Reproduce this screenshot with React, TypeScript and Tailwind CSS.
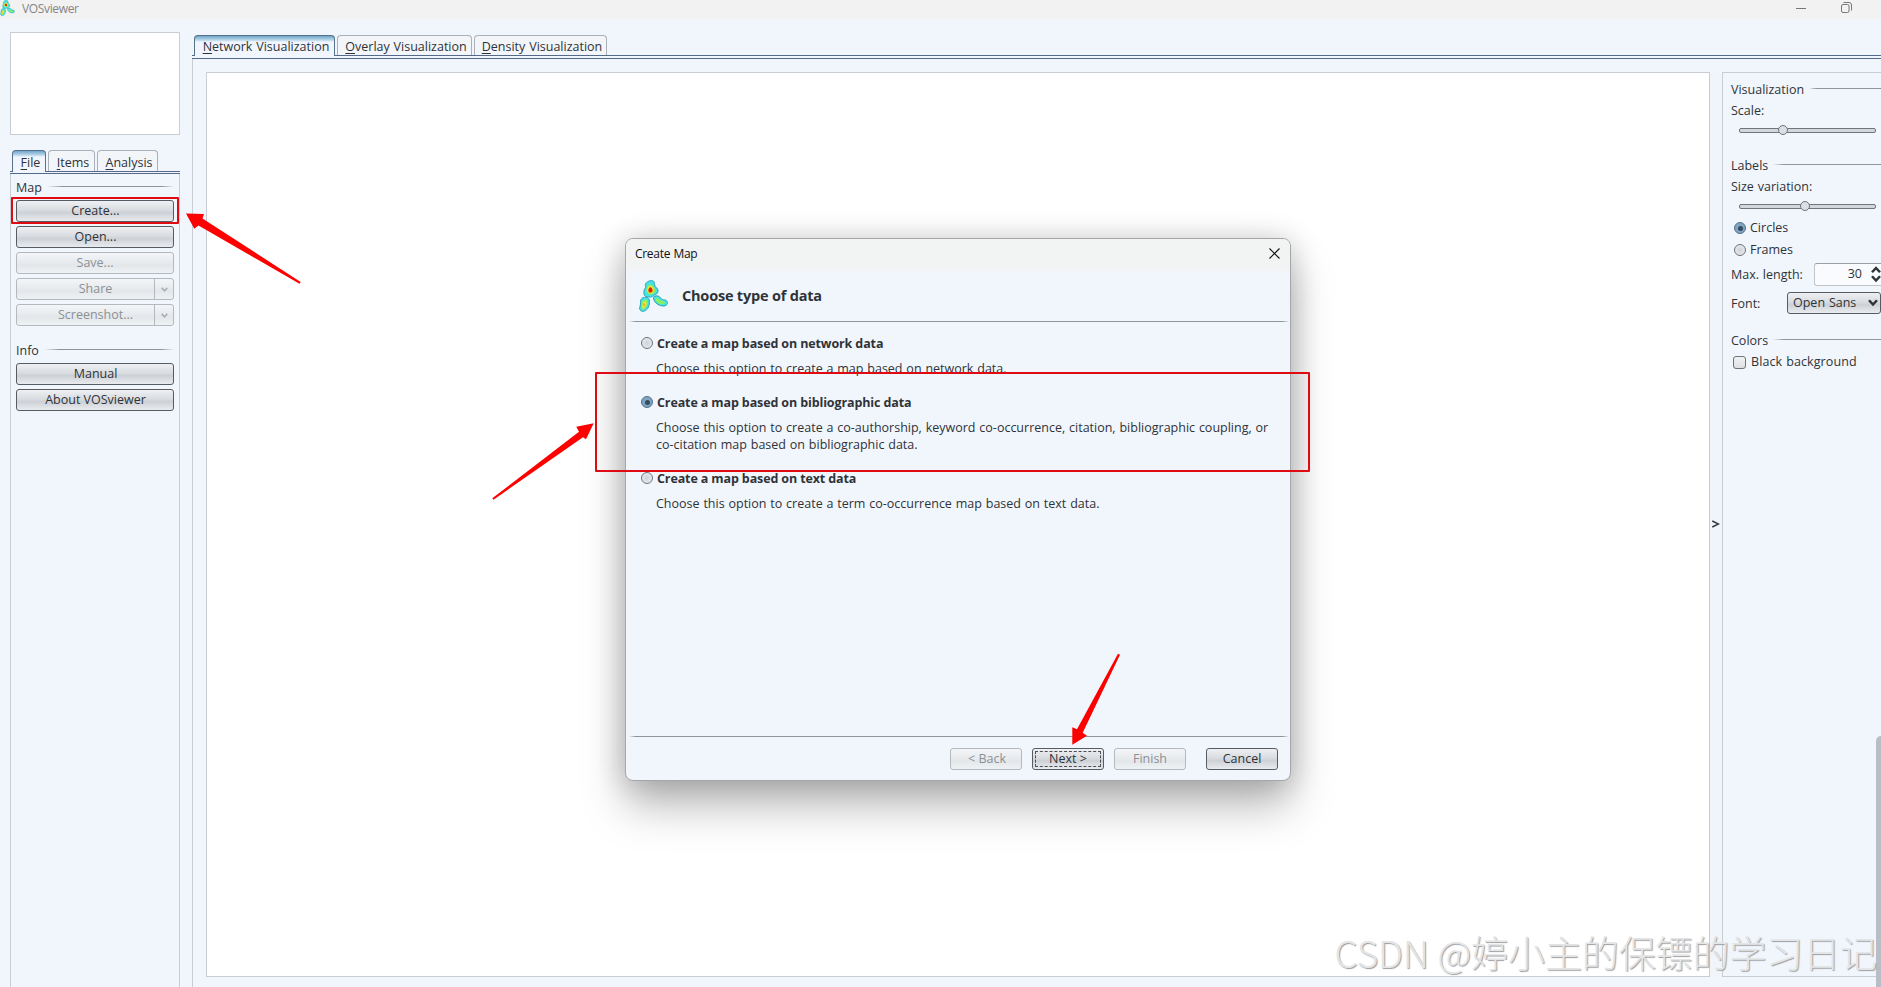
import type { ReactNode } from "react";
import clsx from "clsx";

function Logo({ className }: { className?: string }) {
  return (
    <svg viewBox="0 0 29 32" className={className}>
      <g stroke="#2ea3b8" strokeWidth="1" strokeLinejoin="round" fill="#45e2e6">
        <path d="M11.300.7c1.700-.3 3.200 0 3.700 1.200.5 1.600.4 3.200 1.200 4.700 1 1.200 2.700 1.900 2.800 3.400 0 1.500-.2 2.700-1 3.600-1.500 1-2.500.9-3.700 2-1 1-2 1.600-3.600 1.400-1.800-.2-4.200.2-5.200-1.500-.9-1.400-.5-3-.5-4.500 0-1.700 1.400-2.500 1.600-3.900.1-1.300-.6-2.200-.1-3.300.8-1.400 3-2.700 4.800-3.100Z" />
        <path d="M14.700 16.700c1.600-.9 3.800-1.300 5.300-.2 1.400.9 2 2.400 3.500 3 1.400.5 3.100.2 4 1.200 1 1.100 1.300 2.700.4 3.800-1 1.100-2.500 1.700-3.900 1.500-1.800-.1-3.500-.6-5-1.500-1.500-.9-2.700-2-3.500-3.500-.7-1.300-1.500-2.900-.8-4.300Z" />
        <path d="M3 18.300c1.500-1 3.400-1.400 5-.8 1.300.4 2.100 1.300 2.300 2.500.4 1.900.2 3.700-.3 5.500-.6 2-1.700 3.900-3.500 5-1.200.9-2.900 1.100-4.200.5C1.200 30.500.5 29.300.7 28c.1-1.400.8-2.600.8-4 0-2-.3-4.400 1.500-5.700Z" />
      </g>
      <g fill="#8ff05a">
        <path d="M11.300 4.500c2 .3 3.300 1.600 3.900 3.400.9 1 1.700 2.300 1 3.800-.8 1.600-2.300 2.700-4.200 2.800-2.300.2-4.300-1.400-4.500-3.600-.1-2.600.9-6.500 3.800-6.400Z" />
        <path d="M17 18.400c1.700-.5 3.200.6 4.300 1.900 1.400 1.100 3.400.8 4.500 2 .3 1.300-.9 2.200-2.400 2-2.200-.1-4.600-.9-5.900-2.800-.7-1-1.200-2.300-.5-3.100Z" />
        <path d="M4.500 20c1.200-.8 3.200-.8 3.900.4.600 2 .2 4-.7 5.900-.7 1.500-1.800 3-3.500 3.300-1.200.2-2-.7-1.900-1.900.1-2.600.2-6 2.200-7.700Z" />
      </g>
      <g fill="#fbe52c">
        <path d="M11.300 6c1.600.1 2.900 1.600 3.200 3.200.4 1.900-.9 3.900-2.900 4.100-1.900.2-3.300-1.400-3.300-3.200.1-1.900 1.200-4.200 3-4.100Z" />
        <path d="M5.900 21.500c1.200-.2 1.700.9 1.400 2.200-.3 1.700-1.200 4-2.700 4.300-1.100 0-1.200-1.200-1-2.400.3-1.500.8-3.800 2.300-4.100Z" />
      </g>
      <ellipse cx="5.300" cy="24.700" rx="1" ry="1.800" fill="#f9ae25" />
      <path d="M11 7.200c1.500-.2 2.300 1.500 2.600 2.900.3 1.300-.9 2.600-2.200 2.500-1.300 0-2.200-1.100-2-2.400.2-1.200.5-2.800 1.600-3Z" fill="#dc200b" />
    </svg>
  );
}

function SectionTitle({ children, fade }: { children: ReactNode; fade?: boolean }) {
  return (
    <div className="flex h-[18px] items-center">
      <span className="whitespace-nowrap">{children}</span>
      <span
        className={clsx(
          "-mt-1 ml-[5px] h-px flex-1",
          fade
            ? "bg-[linear-gradient(90deg,transparent,#8d949c_12%,#8d949c_90%,transparent)]"
            : "bg-[linear-gradient(90deg,transparent,#8d949c_10%)]"
        )}
      />
    </div>
  );
}

function Button({
  children,
  disabled,
  menu,
  focused,
  className,
}: {
  children: ReactNode;
  disabled?: boolean;
  menu?: boolean;
  focused?: boolean;
  className?: string;
}) {
  return (
    <button
      disabled={disabled}
      className={clsx(
        "relative flex h-[22px] items-center justify-center rounded-[3px] border pb-px",
        disabled
          ? "border-[#b4b9bf] bg-[linear-gradient(#f3f5f7,#e7eaed_50%,#e4e7ea_60%,#eff2f5)] text-[#8b9095]"
          : "border-[#565c64] bg-[linear-gradient(#eef0f3,#d9dce0_45%,#cdd1d6_58%,#e9ebee)]",
        className
      )}
    >
      {children}
      {menu && (
        <span className="absolute inset-y-0 right-0 flex w-[19px] items-center justify-center border-l border-[#b4b9bf] text-[#a9aeb3]">
          <Chevron className="mt-0.5 w-[7px]" />
        </span>
      )}
      {focused && <span className="absolute inset-[2px] rounded-[1px] border border-dashed border-[#4a4f55]" />}
    </button>
  );
}

function Chevron({ className, width = 1.8 }: { className?: string; width?: number }) {
  return (
    <svg viewBox="0 0 8 6" className={className} fill="none" stroke="currentColor" strokeWidth={width}>
      <path d="M.8 1 4 4.400 7.200 1" />
    </svg>
  );
}

function Tab({ label, active, className }: { label: string; active?: boolean; className?: string }) {
  return (
    <div
      className={clsx(
        "flex justify-center rounded-t-[4px] border border-b-0 pl-[3px] whitespace-nowrap",
        active
          ? "z-10 border-[#56718c] bg-[linear-gradient(#6fa6c9,#b9d6ea_4px,#f1f6fe_6px)]"
          : "mb-px border-[#a9b0b7] bg-[linear-gradient(#f3f5f8,#f2f6fb)]",
        className
      )}
    >
      <span>
        <span className="underline underline-offset-2">{label[0]}</span>
        {label.slice(1)}
      </span>
    </div>
  );
}

function Radio({ checked }: { checked?: boolean }) {
  return (
    <span
      className={clsx(
        "flex size-3 shrink-0 items-center justify-center rounded-full border",
        checked
          ? "border-[#55718b] bg-[#7ea5c3]"
          : "border-[#6d737a] bg-[radial-gradient(#cfd2d6,#f0f1f3)]"
      )}
    >
      {checked && <span className="size-[5px] rounded-full bg-[#364b5e]" />}
    </span>
  );
}

function Slider({ thumb }: { thumb: string }) {
  return (
    <div className="relative ml-2 h-[5px] w-[137px] rounded-[2px] border border-[#6f757c] bg-[#d3d7db]">
      <span className={clsx("absolute -top-[4px] size-[10px] rounded-full border border-[#6f757c] bg-[#dcdfe2]", thumb)} />
    </div>
  );
}

function Option({
  title,
  checked,
  children,
  className,
}: {
  title: string;
  checked?: boolean;
  children: ReactNode;
  className?: string;
}) {
  return (
    <div className={className}>
      <div className="flex h-[18px] items-center gap-[4px] font-bold tracking-[-0.12px] [word-spacing:0px]">
        <Radio checked={checked} />
        <span className="pt-0.5 whitespace-nowrap">{title}</span>
      </div>
      <p className="mt-2 ml-[15px] leading-[17px] whitespace-nowrap">{children}</p>
    </div>
  );
}

function Sidebar() {
  return (
    <aside className="ml-[10px] flex w-[170px] shrink-0 flex-col pt-[13px]">
      <div className="h-[103px] border border-[#c9ced4] bg-white" />
      <div className="mt-[15px] flex h-[22px] gap-[2px] pl-[2px] leading-[23px]">
        <Tab label="File" active className="w-[34px]" />
        <Tab label="Items" className="w-[47px]" />
        <Tab label="Analysis" className="w-[61px]" />
      </div>
      <div className="-mt-px h-[3px] border-y border-[#56698a]" />
      <div className="flex-1 border-x border-[#c9ced4] px-[5px] pt-[5px]">
        <SectionTitle fade>Map</SectionTitle>
        <div className="mt-[3px] flex flex-col gap-1">
          <Button className="pl-px">Create...</Button>
          <Button className="pl-px">Open...</Button>
          <Button disabled>Save...</Button>
          <Button disabled menu className="pl-px">Share</Button>
          <Button disabled menu className="pl-px">Screenshot...</Button>
        </div>
        <div className="mt-4">
          <SectionTitle fade>Info</SectionTitle>
        </div>
        <div className="mt-[3px] flex flex-col gap-1">
          <Button className="pl-px">Manual</Button>
          <Button className="pl-px">About VOSviewer</Button>
        </div>
      </div>
    </aside>
  );
}

function OptionsPanel() {
  return (
    <aside className="flex w-[159px] shrink-0 flex-col border border-r-0 border-[#c9ced4] pl-2">
      <div className="mt-2">
        <SectionTitle>Visualization</SectionTitle>
      </div>
      <div className="mt-[3px] mb-[8px] h-[18px]">Scale:</div>
      <Slider thumb="left-[38px]" />
      <div className="mt-6">
        <SectionTitle>Labels</SectionTitle>
      </div>
      <div className="mt-[3px] mb-[8px] h-[18px]">Size variation:</div>
      <Slider thumb="left-[60px]" />
      <div className="mt-[10px] ml-[3px] flex h-[18px] items-center gap-1">
        <Radio checked />
        Circles
      </div>
      <div className="mt-1 ml-[3px] flex h-[18px] items-center gap-1">
        <Radio />
        Frames
      </div>
      <div className="mt-1 flex h-[23px] items-center">
        <span className="w-[83px] whitespace-nowrap">Max. length:</span>
        <div className="flex h-full flex-1 items-center justify-end gap-[9px] rounded-l-[3px] border border-r-0 border-[#c0c6cc] border-t-[#9aa0a7] bg-[#f9fbfe] pb-px">
          <span>30</span>
          <span className="flex flex-col gap-[2px]">
            <Chevron width={2} className="w-[10px] rotate-180" />
            <Chevron width={2} className="w-[10px]" />
          </span>
        </div>
      </div>
      <div className="mt-[6px] flex h-[22px] items-center">
        <span className="w-14 pt-0.5">Font:</span>
        <div className="flex h-full flex-1 items-center justify-between rounded-[3px] border border-[#565c64] bg-[linear-gradient(#eef0f3,#d9dce0_45%,#cdd1d6_58%,#e9ebee)] pr-[2px] pb-px pl-[5px] whitespace-nowrap">
          Open Sans
          <Chevron width={2} className="mt-px w-[10px]" />
        </div>
      </div>
      <div className="mt-[18px]">
        <SectionTitle>Colors</SectionTitle>
      </div>
      <div className="mt-[3px] ml-[2px] flex h-[18px] items-center gap-[5px] tracking-[0.1px] whitespace-nowrap">
        <span className="size-[13px] rounded-[3px] border border-[#6d737a] bg-[linear-gradient(#f1f2f4,#dcdfe2)]" />
        Black background
      </div>
    </aside>
  );
}

function CreateMapDialog() {
  return (
    <div
      role="dialog"
      className="absolute top-[238px] left-[625px] flex h-[543px] w-[666px] flex-col overflow-hidden rounded-lg border border-[#a3a7ab] bg-[#f1f6fd] shadow-[0_26px_44px_rgba(0,0,0,0.26),0_2px_30px_rgba(0,0,0,0.2)]"
    >
      <div className="flex h-8 shrink-0 items-center justify-between bg-[#f2f3f3] pr-[10px] pb-0.5 pl-[9px]">
        <span className="text-[12px] tracking-[-0.3px] text-[#111]">Create Map</span>
        <svg viewBox="0 0 11 11" className="-mt-0.5 size-[11px]" stroke="#111" strokeWidth="1.1">
          <path d="m.5.500 10 10M10.500.500l-10 10" />
        </svg>
      </div>
      <div className="flex h-[50px] shrink-0 items-center pl-[13px]">
        <Logo className="-mt-px h-8 w-[29px]" />
        <h1 className="ml-[14px] text-[14.500px] font-bold tracking-[-0.2px] whitespace-nowrap [word-spacing:0px]">
          Choose type of data
        </h1>
      </div>
      <div className="mr-px ml-[3px] h-px shrink-0 bg-[linear-gradient(90deg,transparent,#8d949c_1%,#8d949c_99%,transparent)]" />
      <div className="flex-1 pt-3 pl-[15px]">
        <Option title="Create a map based on network data">
          Choose this option to create a map based on network data.
        </Option>
        <Option title="Create a map based on bibliographic data" checked className="mt-4">
          Choose this option to create a co-authorship, keyword co-occurrence, citation, bibliographic coupling, or
          <br />
          co-citation map based on bibliographic data.
        </Option>
        <Option title="Create a map based on text data" className="mt-4">
          Choose this option to create a term co-occurrence map based on text data.
        </Option>
      </div>
      <div className="mr-px ml-[3px] h-px shrink-0 bg-[linear-gradient(90deg,transparent,#8d949c_1%,#8d949c_99%,transparent)]" />
      <div className="flex h-[43px] shrink-0 justify-end gap-[10px] pt-[11px] pr-3">
        <Button disabled className="w-[72px] pl-0.5">&lt; Back</Button>
        <Button focused className="w-[72px]">Next &gt;</Button>
        <Button disabled className="w-[72px]">Finish</Button>
        <Button className="ml-[10px] w-[72px]">Cancel</Button>
      </div>
    </div>
  );
}

function Annotations() {
  return (
    <svg viewBox="0 0 1881 987" className="pointer-events-none absolute inset-0 h-full w-full">
      <g fill="none" stroke="#e00b12" strokeWidth="2" strokeLinejoin="round">
        <rect x="12" y="198" width="166" height="25" />
        <rect x="596" y="373" width="713" height="98" />
      </g>
      <g fill="#fe0000">
        <path d="M186 213.500 204 214 202.500 218.500 300.700 282 299.500 283.800 198.500 225.500 194.300 228.700Z" />
        <path d="M593.700 423.300 576.300 426.700 579 431.700 492.300 498.300 493.500 499.700 583 437.300 586 439.300Z" />
        <path d="M1072.300 744.700V727.300L1077 729.300 1118 653.700 1120 654.700 1082.700 732.700 1087 735.700Z" />
      </g>
    </svg>
  );
}

export default function App() {
  return (
    <div className="relative flex h-[987px] w-full flex-col overflow-hidden bg-[#f1f6fd] font-['Open_Sans','Noto_Sans',sans-serif] text-[12.500px] leading-[18px] text-[#2f3337] [word-spacing:0.6px]">
      <header className="flex h-[19px] shrink-0 items-center bg-[#f2f2f2]">
        <Logo className="-mt-1 h-[16px] w-[15px]" />
        <span className="-mt-px ml-[7px] text-[12px] tracking-[-0.35px] text-[#858585]">VOSviewer</span>
        <div className="mr-[29px] ml-auto flex items-center gap-[35px] pb-1">
          <span className="mt-px h-px w-[10px] bg-[#777]" />
          <svg viewBox="0 0 11 11" className="size-[11px]" fill="none" stroke="#777">
            <rect x=".5" y="2.500" width="7.500" height="8" rx="1.500" />
            <path d="M2.500.500h5.500a2.500 2.500 0 0 1 2.500 2.500v5.500" />
          </svg>
        </div>
      </header>

      <div className="flex min-h-0 flex-1">
        <Sidebar />
        <main className="ml-3 flex min-w-0 flex-1 flex-col pt-4">
          <div className="flex h-[21px] gap-[2px] pl-[2px] leading-[22px]">
            <Tab label="Network Visualization" active className="w-[141px]" />
            <Tab label="Overlay Visualization" className="w-[135px]" />
            <Tab label="Density Visualization" className="w-[133px]" />
          </div>
          <div className="-mt-px h-1 shrink-0 border-y border-[#56698a]" />
          <div className="flex min-h-0 flex-1 border-l border-[#c9ced4] pt-[13px] pb-[10px] pl-[13px]">
            <div className="min-w-0 flex-1 border border-[#c9ced4] bg-white" />
            <div className="flex w-3 shrink-0 items-start justify-center bg-[#f1f5fa] pt-[448px]">
              <svg viewBox="0 0 8 8" className="h-2 w-2" fill="none" stroke="#33373c" strokeWidth="1.400">
                <path d="M.3 1 6.500 4 .3 7" />
              </svg>
            </div>
            <OptionsPanel />
          </div>
        </main>
      </div>

      <div className="absolute right-0 bottom-0 h-[251px] w-[5px] rounded-tl-[5px] bg-[#b9bdc5]" />
      <CreateMapDialog />
      <Annotations />
      <div className="absolute right-[4px] bottom-[8px] font-['Noto_Sans_CJK_SC',sans-serif] text-[37px] leading-[54px] font-light tracking-[-0.1px] whitespace-nowrap text-[#e3e5e7] [text-shadow:1px_1px_1px_#9b9da0]">
        CSDN @婷小主的保镖的学习日记
      </div>
    </div>
  );
}
